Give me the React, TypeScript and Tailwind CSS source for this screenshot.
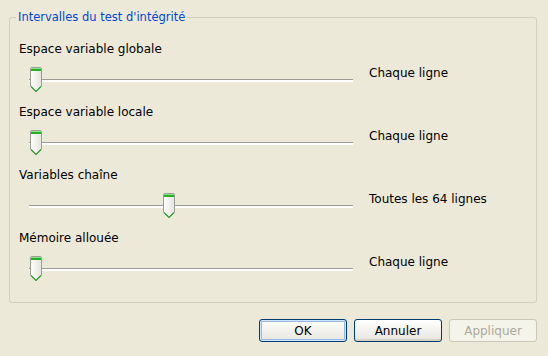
import React from "react";

const rows = [
  { label: "Espace variable globale", value: "Chaque ligne", pos: 11 },
  { label: "Espace variable locale", value: "Chaque ligne", pos: 11 },
  { label: "Variables chaîne", value: "Toutes les 64 lignes", pos: 144 },
  { label: "Mémoire allouée", value: "Chaque ligne", pos: 11 },
];

function Thumb({ left }: { left: number }) {
  return (
    <svg
      width="12"
      height="26"
      viewBox="0 0 12 26"
      className="absolute top-0"
      style={{ left }}
    >
      <defs>
        <linearGradient id="tb" x1="0" y1="0" x2="1" y2="0">
          <stop offset="0" stopColor="#ffffff" />
          <stop offset="1" stopColor="#e4e3dc" />
        </linearGradient>
      </defs>
      <path
        d="M0.5 2 Q0.5 0.5 2 0.5 H10 Q11.5 0.5 11.5 2 V19 L6 24.5 L0.5 19 Z"
        fill="url(#tb)"
        stroke="#9c9c98"
      />
      <rect x="1" y="1" width="10" height="1" fill="#8be68b" />
      <rect x="1" y="2" width="10" height="2" fill="#21b121" />
      <polyline
        points="1,19.5 6,24.5 11,19.5"
        fill="none"
        stroke="#2fa12f"
        strokeWidth="1.2"
      />
    </svg>
  );
}

export default function App() {
  return (
    <div
      className="w-[548px] h-[356px] bg-[#ece9d8] flex flex-col pl-[9px] pr-[11px] pt-[10px] text-[12px] text-black"
      style={{ fontFamily: '"DejaVu Sans", "Liberation Sans", sans-serif' }}
    >
      <fieldset className="h-[293px] border border-[#d0d0bf] rounded-[3px]">
        <legend className="ml-[6px] px-[2px] text-[#0046d5] text-[11.5px] leading-[14px]">
          Intervalles du test d'intégrité
        </legend>

        <div className="flex flex-col gap-[13px] mt-[19px] pl-[9px]">
          {rows.map((r) => (
            <div key={r.label} className="flex">
              <div className="w-[334px]">
                <div className="leading-[13px]">{r.label}</div>
                <div className="relative h-[26px] mt-[11px]">
                  <div className="absolute left-[10px] top-[12px] w-[324px] h-[3px] border-t border-[#9d9c94] bg-white" />
                  <Thumb left={r.pos} />
                </div>
              </div>
              <div className="ml-[16px] pt-[24px] leading-[13px]">{r.value}</div>
            </div>
          ))}
        </div>
      </fieldset>

      <div className="flex justify-end gap-[7px] mt-[16px]">
        <button className="w-[88px] h-[23px] rounded-[3px] border border-[#003c74] bg-gradient-to-b from-white to-[#e6e5de] shadow-[inset_0_0_0_1px_#cee7ff,inset_0_0_0_2px_#98b8ea] leading-none">
          OK
        </button>
        <button className="w-[88px] h-[23px] rounded-[3px] border border-[#003c74] bg-gradient-to-b from-white to-[#e6e5de] shadow-[inset_0_-2px_0_#d6d0c5] leading-none">
          Annuler
        </button>
        <button className="w-[88px] h-[23px] rounded-[3px] border border-[#c9c7ba] bg-[#f5f4ea] text-[#aca899] leading-none">
          Appliquer
        </button>
      </div>
    </div>
  );
}
